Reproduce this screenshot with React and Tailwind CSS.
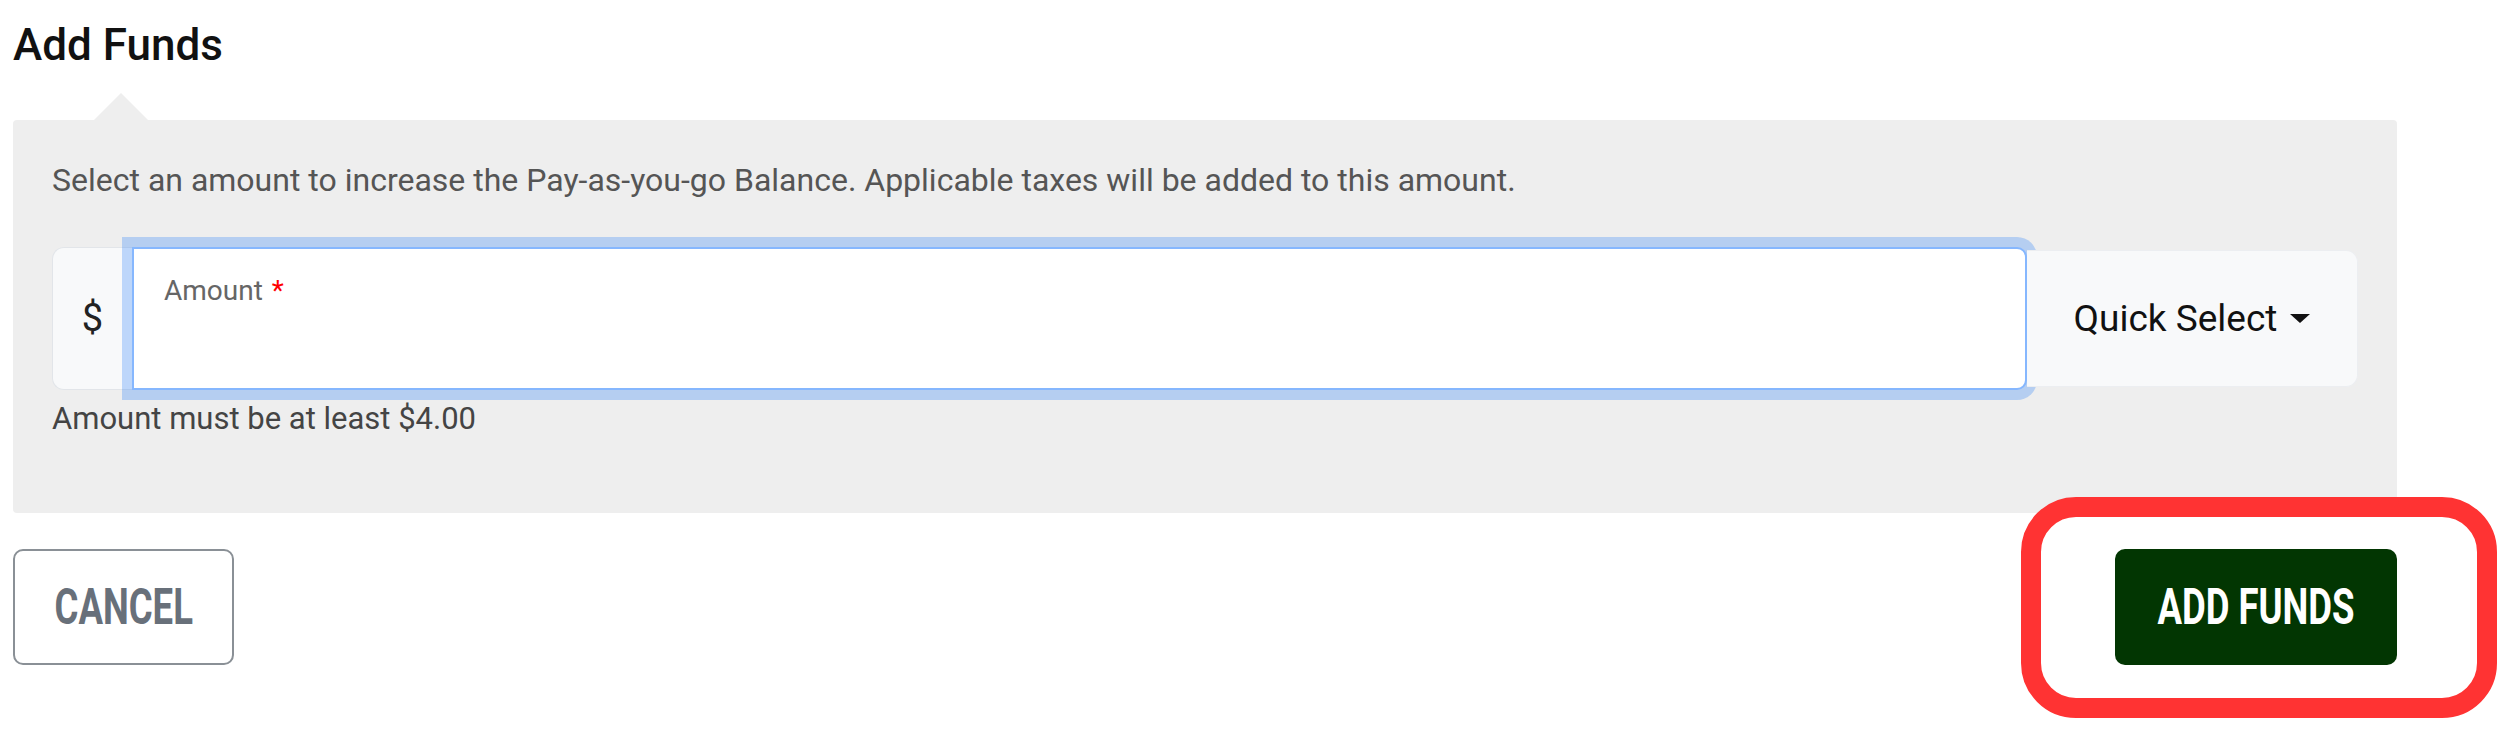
import { useState } from "react";

function Caret() {
  return (
    <svg className="ml-[13px] h-[9px] w-[20px]" viewBox="0 0 20 9" aria-hidden="true">
      <path d="M0 0h20L10 9z" fill="#111111" />
    </svg>
  );
}

function App() {
  const [amount, setAmount] = useState("");

  return (
    <div className="min-h-screen bg-white pl-[13px] pr-[111px] pt-[18px] font-['Roboto',sans-serif]">
      <h2 className="text-[44px] font-medium leading-[54px] text-[#111111]">Add Funds</h2>

      <div className="relative mt-[48px] rounded-[4px] bg-[#eeeeee] px-[39px] pb-[72px] pt-[38px]">
        {/* speech arrow above the panel */}
        <span className="absolute -top-[27px] left-[81px] h-0 w-0 border-x-[27px] border-b-[27px] border-x-transparent border-b-[#eeeeee]" />

        <p className="text-[32px] leading-[44px] text-[#555555]">
          Select an amount to increase the Pay-as-you-go Balance. Applicable taxes will be added to this amount.
        </p>

        <div className="mt-[45px] flex h-[143px]">
          <div className="relative z-0 flex w-[80px] items-center justify-center rounded-l-[12px] border border-r-0 border-[#e2e5e9] bg-[#f8f9fa] text-[38px] text-[#222222]">
            $
          </div>

          <label className="relative z-10 flex-1 rounded-r-[10px] border-2 border-[#86b7fe] bg-white shadow-[0_0_0_10px_rgba(13,110,253,0.25)]">
            <span className="absolute left-[30px] top-[22px] text-[28px] leading-[40px] text-[#666666]">
              Amount <span className="ml-[2px] text-[#ff0000]">*</span>
            </span>
            <input
              value={amount}
              onChange={(e) => setAmount(e.target.value)}
              className="h-full w-full bg-transparent px-[30px] pt-[50px] text-[38px] text-[#222222] outline-none"
            />
          </label>

          <button
            type="button"
            className="relative z-20 my-[3px] flex w-[331px] items-center justify-center rounded-r-[12px] border border-l-0 border-[#eceef1] bg-[#f8f9fa] text-[37px] text-[#111111]"
          >
            Quick Select
            <Caret />
          </button>
        </div>

        <p className="mt-[7px] text-[31px] leading-[44px] text-[#444444]">Amount must be at least $4.00</p>
      </div>

      <div className="mt-[36px] flex items-start justify-between">
        <button
          type="button"
          className="flex h-[116px] w-[221px] items-center justify-center rounded-[10px] border-2 border-[#8a9096] bg-white text-[#68707a]"
        >
          <span className="inline-block scale-x-[0.73] text-[50px] font-bold leading-none">CANCEL</span>
        </button>

        <div className="relative">
          <button
            type="button"
            className="flex h-[116px] w-[282px] items-center justify-center rounded-[10px] bg-[#023602] text-white"
          >
            <span className="inline-block scale-x-[0.73] text-[50px] font-bold leading-none">ADD FUNDS</span>
          </button>
          {/* highlight drawn over the button */}
          <span className="pointer-events-none absolute -bottom-[53px] -left-[94px] -right-[100px] -top-[52px] rounded-[55px] border-[20px] border-[#ff3333]" />
        </div>
      </div>
    </div>
  );
}

export default App;
